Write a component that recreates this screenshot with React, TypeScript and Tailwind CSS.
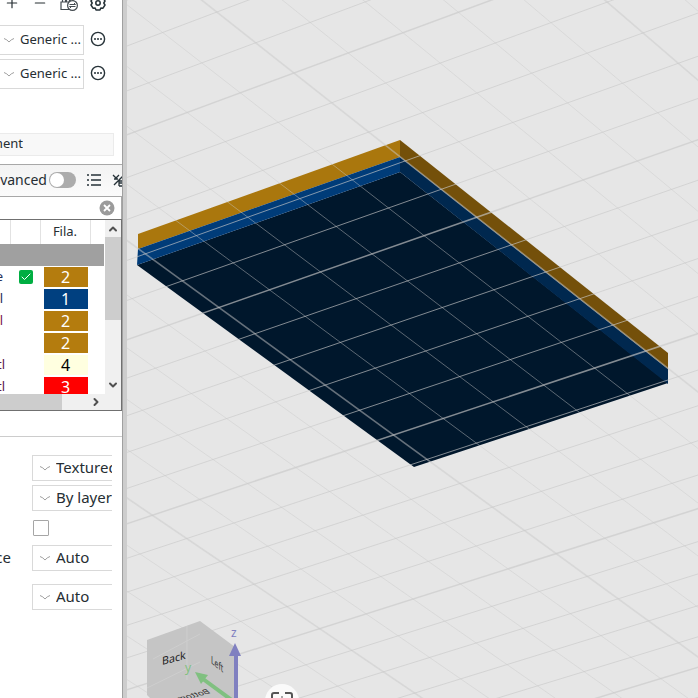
import type { ReactNode } from 'react';
import { Check, ChevronDown, ChevronUp, Minus, Plus } from 'lucide-react';

interface Part {
  name: string;
  nameColor: string;
  filament: number;
  swatch: string;
  printable?: boolean;
}

const PARTS: Part[] = [
  { name: 'e', nameColor: 'w-[3px] text-[#26315c]', filament: 2, swatch: 'bg-[#b47c0e] text-white', printable: true },
  { name: 'l', nameColor: 'w-[3px] text-[#26315c]', filament: 1, swatch: 'bg-[#004080] text-white' },
  { name: 'l', nameColor: 'w-[3px] text-[#7a1450]', filament: 2, swatch: 'bg-[#b47c0e] text-white' },
  { name: '', nameColor: 'w-[3px] text-[#26315c]', filament: 2, swatch: 'bg-[#b47c0e] text-white' },
  { name: 'tl', nameColor: 'w-[5px] text-[#5a2050]', filament: 4, swatch: 'bg-[#ffffe0] text-black' },
  { name: 'tl', nameColor: 'w-[5px] text-[#5a2050]', filament: 3, swatch: 'bg-[#ff0000] text-white' },
];

// Projects a grid node of the build plate to canvas coordinates
function project(i: number, j: number) {
  const depth = 1 + 0.005 * i + 0.0079 * j;
  return {
    x: (294 - 52.5 * i + 40.3 * j) / depth,
    y: (73 + 20.3 * i + 30.57 * j) / depth,
  };
}

function range(from: number, to: number) {
  return Array.from({ length: to - from + 1 }, (_, n) => from + n);
}

function PlateGrid() {
  return (
    <g stroke="#cacaca">
      {range(-12, 22).map((i) => {
        const a = project(i, -12);
        const b = project(i, 32);
        const major = i % 5 === 0;
        return (
          <line
            key={`i${i}`}
            x1={a.x}
            y1={a.y}
            x2={b.x}
            y2={b.y}
            strokeOpacity={major ? 0.5 : 0.45}
            strokeWidth={major ? 1.6 : 1}
          />
        );
      })}
      {range(-12, 32).map((j) => {
        const a = project(-12, j);
        const b = project(22, j);
        const major = j % 5 === 0;
        return (
          <line
            key={`j${j}`}
            x1={a.x}
            y1={a.y}
            x2={b.x}
            y2={b.y}
            strokeOpacity={0.65}
            strokeWidth={major ? 1.5 : 1}
          />
        );
      })}
    </g>
  );
}

function Model() {
  return (
    <g>
      <polygon points="137,265 400,172 668,383 414,467" fill="#00172c" />
      <polygon points="138,234 400,140 400,157 138,249" fill="#aa770d" />
      <polygon points="400,140 668,353 668,369 400,157" fill="#74500a" />
      <polygon points="138,249 400,157 400,172 137,265" fill="#003c79" />
      <polygon points="400,157 668,369 668,384 400,172" fill="#00284f" />
    </g>
  );
}

function ViewCube() {
  return (
    <g fontFamily='"Noto Sans", sans-serif'>
      <polygon points="147,640 200,621 235,647 235,700 152,700 147,695" fill="#c5c5c5" />
      <path d="M187 626V680M153 659L200 634M147 688L200 662" stroke="#cecece" fill="none" />
      <text transform="matrix(0.97 -0.25 0 1 162 665)" fontSize="11" fill="#222222">
        Back
      </text>
      <text transform="matrix(0.62 0.5 0 1 211 663)" fontSize="11" fill="#333333">
        Left
      </text>
      <text transform="matrix(-0.75 0.2 0.5 0.5 211 693)" fontSize="12" fill="#333333">
        Bottom
      </text>
      <path d="M236 700V653" stroke="#8080c0" strokeWidth="4" />
      <polygon points="235,643 241,656 229,656" fill="#8080c0" />
      <text x="231" y="637" fontSize="12" fill="#8080c0">
        z
      </text>
      <path d="M233 701L203 679" stroke="#80c080" strokeWidth="4" />
      <polygon points="195,672 208,675 201,684" fill="#80c080" />
      <text x="185" y="672" fontSize="12" fill="#80c080">
        y
      </text>
    </g>
  );
}

function Caret({ className }: { className: string }) {
  return (
    <svg viewBox="0 0 12 8" className={className} fill="none" stroke="#a0a0a0">
      <path d="M1 2.500Q4 3.500 6 6Q8 3.500 11 2.500" />
    </svg>
  );
}

function MoreButton({ label }: { label: string }) {
  return (
    <button type="button" aria-label={label} className="shrink-0 pb-0.5">
      <svg viewBox="0 0 16 16" className="size-4">
        <circle cx="8" cy="8" r="6.6" fill="none" stroke="#263238" strokeWidth="1.4" />
        <path d="M4 8h2M7 8h2M10 8h2" stroke="#263238" strokeWidth="1.6" />
      </svg>
    </button>
  );
}

function FilamentRow({ label }: { label: string }) {
  return (
    <div className="flex items-center gap-1.5">
      <div className="flex h-[30px] w-[84px] items-center border border-l-0 border-[#d9d9d9] pl-[3px]">
        <Caret className="mr-[5px] h-2 w-3 shrink-0" />
        <select aria-label={label} className="h-full w-16 appearance-none bg-transparent text-[13px] outline-none">
          <option>Generic ...</option>
        </select>
      </div>
      <MoreButton label={`${label} options`} />
    </div>
  );
}

function SettingSelect({ label, value }: { label: string; value: string }) {
  return (
    <div className="flex h-[26px] w-20 items-center border border-r-0 border-[#d9d9d9] pl-1.5">
      <Caret className="mr-[5px] h-2 w-3 shrink-0" />
      <select
        aria-label={label}
        className="h-full min-w-0 flex-1 appearance-none overflow-hidden bg-transparent pb-0.5 text-[15px] outline-none"
      >
        <option>{value}</option>
      </select>
    </div>
  );
}

// Text that runs out past the left edge of its box
function Tail({ children, className }: { children: ReactNode; className: string }) {
  return <span className={`flex justify-end overflow-hidden whitespace-nowrap ${className}`}>{children}</span>;
}

function FilamentToolbar() {
  return (
    <div className="flex h-[11px] shrink-0 items-end overflow-hidden pl-1">
      <button type="button" aria-label="Add filament">
        <Plus className="size-4" strokeWidth={1.8} />
      </button>
      <button type="button" aria-label="Remove filament" className="ml-3">
        <Minus className="size-4" strokeWidth={1.8} />
      </button>
      <button type="button" aria-label="Sync filaments" className="ml-3">
        <svg viewBox="0 0 18 18" className="size-[18px]" fill="none" stroke="#444b50" strokeWidth="1.2">
          <path d="M9 16.500H1V9H15M2.500 9V6H5.500V9M6.500 9V6H9.500V9M10.500 9V6H13.500V9" />
          <circle cx="12.500" cy="12.500" r="4.900" fill="white" />
          <path d="M9.500 11.500H15.500L14 10M15.500 13.500H9.500L11 15" strokeWidth="1" />
        </svg>
      </button>
      <button type="button" aria-label="Filament settings" className="ml-3">
        <svg viewBox="0 0 16 16" className="size-4" fill="none" stroke="#263238" strokeWidth="1.5">
          <path
            d="M6 1H10L10.800 3L13 2.800L15 6L13.800 8L15 10L13 13.200L10.800 13L10 15H6L5.200 13L3 13.200L1 10L2.200 8L1 6L3 2.800L5.200 3Z"
            strokeLinejoin="round"
          />
          <circle cx="8" cy="8" r="2.200" />
        </svg>
      </button>
    </div>
  );
}

function ProcessHeader() {
  return (
    <div className="flex h-8 shrink-0 items-center overflow-hidden border-t border-[#a8a8a8] bg-linear-to-b from-[#f3f3f3] to-[#fbfbfb] pb-0.5">
      <label htmlFor="advanced" className="shrink-0">
        <Tail className="w-[47px] text-[14px]">vanced</Tail>
      </label>
      <span className="relative ml-0.5 h-4 w-[27px] shrink-0">
        <input
          id="advanced"
          type="checkbox"
          role="switch"
          className="peer block h-4 w-[27px] appearance-none rounded-full bg-[#acacac]"
        />
        <span className="pointer-events-none absolute top-px left-px size-3.5 rounded-full bg-white peer-checked:left-3" />
      </span>
      <button type="button" aria-label="Object list" className="ml-2.5 shrink-0">
        <svg viewBox="0 0 16 14" className="h-3.5 w-4" stroke="#263238" strokeWidth="1.5">
          <path d="M1 2h2M5 2h10M1 7h2M5 7h10M1 12h2M5 12h10" />
        </svg>
      </button>
      <button type="button" aria-label="Compare presets" className="ml-2.5 shrink-0">
        <svg viewBox="0 0 16 16" className="size-4" fill="none" stroke="#263238" strokeWidth="1.3">
          <path d="M2 13L13 2M1 3L4 6L7 3M2 7L6 7M7 14V9H12M7 11H11M7 14H12" />
        </svg>
      </button>
    </div>
  );
}

function ObjectTable() {
  return (
    <div className="h-[192px] shrink-0 border-t border-r border-b border-[#707070]">
      <div className="flex h-[174px]">
        <div className="w-[104px] shrink-0 overflow-hidden">
          <table className="w-[104px] table-fixed border-collapse text-[13px]">
            <colgroup>
              <col className="w-[10px]" />
              <col className="w-[30px]" />
              <col className="w-[50px]" />
              <col className="w-[14px]" />
            </colgroup>
            <thead>
              <tr className="h-6">
                <th className="border-r border-[#e2e2e2] p-0" />
                <th className="border-r border-[#e2e2e2] p-0" />
                <th className="border-r border-[#e2e2e2] p-0 font-normal">Fila.</th>
                <th className="p-0" />
              </tr>
            </thead>
            <tbody>
              <tr className="h-[22px] bg-[#a0a0a0]">
                <td colSpan={4} className="p-0" />
              </tr>
              {PARTS.map((part, index) => (
                <tr key={index} className="h-[22px]">
                  <td className="p-0">
                    <Tail className={part.nameColor}>{part.name}</Tail>
                  </td>
                  <td className="p-0">
                    {part.printable && (
                      <button
                        type="button"
                        aria-label="Printable"
                        className="ml-[9px] flex size-3.5 items-center justify-center rounded-xs bg-[#00ae42]"
                      >
                        <Check className="size-3 text-white" strokeWidth={2} />
                      </button>
                    )}
                  </td>
                  <td className="py-px pr-0.5 pl-1">
                    <span className={`flex h-5 items-center justify-center pr-px text-[16px] ${part.swatch}`}>
                      {part.filament}
                    </span>
                  </td>
                  <td className="p-0" />
                </tr>
              ))}
            </tbody>
          </table>
        </div>
        <div className="ml-px flex flex-1 flex-col items-center bg-[#f0f0f0]">
          <button type="button" aria-label="Scroll up" className="flex h-[17px] items-center">
            <ChevronUp className="size-3 text-[#505050]" strokeWidth={4} />
          </button>
          <div className="h-[83px] w-full bg-[#cdcdcd]" />
          <button type="button" aria-label="Scroll down" className="mt-auto flex h-[19px] items-center">
            <ChevronDown className="size-3 text-[#505050]" strokeWidth={4} />
          </button>
        </div>
      </div>
      <div className="flex h-4 items-center bg-[#f0f0f0]">
        <div className="h-full w-[62px] bg-[#cdcdcd]" />
        <button type="button" aria-label="Scroll right" className="ml-7">
          <ChevronDown className="size-3 -rotate-90 text-[#505050]" strokeWidth={4} />
        </button>
      </div>
    </div>
  );
}

function Sidebar() {
  return (
    <aside className="flex w-[122px] shrink-0 flex-col overflow-hidden bg-white">
      <FilamentToolbar />
      <div className="mt-3.5 flex flex-col gap-1">
        <FilamentRow label="Filament 1" />
        <FilamentRow label="Filament 2" />
      </div>
      <div className="mt-11 mb-2 flex h-[23px] w-[114px] shrink-0 items-center border border-l-0 border-[#ebebeb] bg-[#f8f8f8] pb-0.5">
        <Tail className="w-[23px] text-[13px]">ment</Tail>
      </div>
      <ProcessHeader />
      <div className="flex h-[23px] shrink-0 items-center border-t border-r border-[#a8a8a8] pr-1.5">
        <input aria-label="Search objects" className="h-full min-w-0 flex-1 outline-none" />
        <button type="button" aria-label="Clear search">
          <svg viewBox="0 0 16 16" className="size-4">
            <circle cx="8" cy="8" r="7.500" fill="#9b9b9b" />
            <path d="M5 5L11 11M11 5L5 11" stroke="white" strokeWidth="1.800" />
          </svg>
        </button>
      </div>
      <ObjectTable />
      <div className="mt-[25px] flex flex-col border-t border-[#cccccc] pt-[18px]">
        <div className="flex flex-col gap-1 pl-8">
          <SettingSelect label="Plate type" value="Textured" />
          <SettingSelect label="Print sequence" value="By layer" />
        </div>
        <input
          type="checkbox"
          aria-label="Spiral vase"
          className="mt-[9px] ml-[33px] size-4 appearance-none rounded-[1px] border border-[#a6a6a6] checked:bg-[#00ae42]"
        />
        <div className="mt-[9px] flex items-center">
          <Tail className="w-8 pr-[21px] pb-0.5 text-[15px]">ce</Tail>
          <SettingSelect label="First layer sequence" value="Auto" />
        </div>
        <div className="mt-[13px] pl-8">
          <SettingSelect label="Other layers sequence" value="Auto" />
        </div>
      </div>
    </aside>
  );
}

export default function App() {
  return (
    <div className='flex min-h-screen overflow-hidden bg-white font-["Noto_Sans",sans-serif] text-[#262e33]'>
      <Sidebar />
      <div className="w-[5px] shrink-0 border-l border-[#a0a0a0] bg-[#cdcdcd]" />
      <main className="relative h-screen min-w-0 flex-1 overflow-hidden bg-[#e6e6e6]">
        <svg viewBox="127 0 571 698" preserveAspectRatio="xMinYMin slice" className="block size-full">
          <Model />
          <PlateGrid />
          <ViewCube />
        </svg>
        <button
          type="button"
          aria-label="Fit view"
          className="absolute -bottom-5 left-[138px] flex size-[34px] items-center justify-center rounded-full bg-[#fafafa]"
        >
          <svg viewBox="0 0 22 22" className="size-[22px]" fill="none" stroke="#555555" strokeWidth="2">
            <path d="M1 8V5Q1 3 3 3H8M14 3H19Q21 3 21 5V8M1 14V17Q1 19 3 19H8M14 19H19Q21 19 21 17V14" />
            <path d="M11 6V16M6 11H16" strokeWidth="1" />
          </svg>
        </button>
      </main>
    </div>
  );
}
